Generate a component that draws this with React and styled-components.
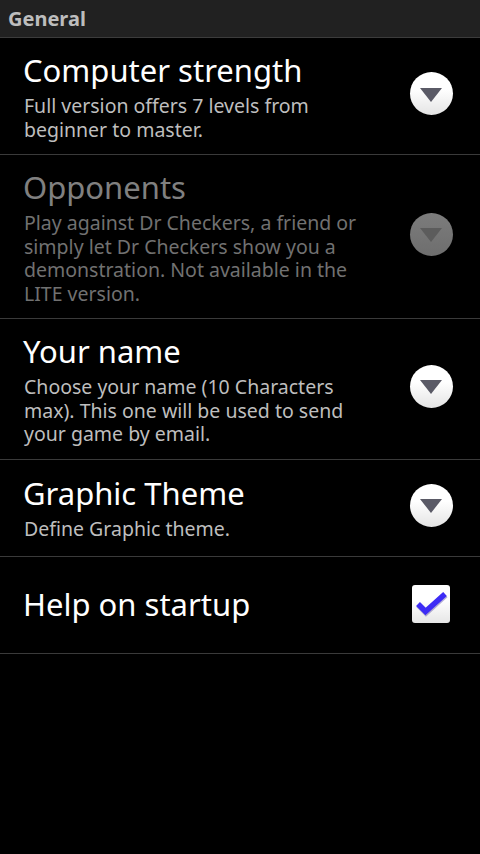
import React from 'react';
import styled, { createGlobalStyle } from 'styled-components';

const GlobalStyle = createGlobalStyle`
  html, body {
    margin: 0;
    padding: 0;
    background: #000;
    height: 100%;
  }
  body {
    font-family: "Noto Sans", "Open Sans", "DejaVu Sans", sans-serif;
  }
`;

const Screen = styled.div`
  width: 480px;
  min-height: 854px;
  background: #000;
  display: flex;
  flex-direction: column;
`;

const CategoryHeader = styled.div`
  height: 37px;
  background: #212121;
  border-bottom: 1px solid #3c3c3c;
  display: flex;
  align-items: center;
  padding-left: 8px;
  color: #bdbdbd;
  font-weight: 700;
  font-size: 20px;
`;

const Row = styled.div`
  min-height: 97px;
  box-sizing: border-box;
  display: flex;
  align-items: center;
  padding: ${(p) => (p.single ? '10px 27px 11px 24px' : '8px 27px 13px 24px')};
  border-bottom: 1px solid #3a3a3a;
`;

const TextBlock = styled.div`
  flex: 1;
  display: flex;
  flex-direction: column;
  min-width: 0;
`;

const Title = styled.div`
  font-size: 31px;
  line-height: 48px;
  margin-left: -1px;
  color: ${(p) => (p.disabled ? '#808080' : '#fff')};
`;

const Summary = styled.div`
  font-size: 19.5px;
  line-height: 23.5px;
  color: ${(p) => (p.disabled ? '#717171' : '#bebebe')};
  padding-right: 40px;
`;

const Widget = styled.div`
  width: 44px;
  height: 44px;
  flex: 0 0 auto;
  display: flex;
  align-items: center;
  justify-content: center;
`;

const Circle = styled.div`
  width: 43px;
  height: 43px;
  border-radius: 50%;
  background: ${(p) =>
    p.disabled
      ? 'linear-gradient(#7c7c7c, #6e6e6e)'
      : 'linear-gradient(#ffffff 40%, #e4e4e4)'};
  display: flex;
  align-items: center;
  justify-content: center;
`;

const Arrow = styled.div`
  width: 0;
  height: 0;
  margin-top: 2px;
  border-left: 11px solid transparent;
  border-right: 11px solid transparent;
  border-top: 14px solid ${(p) => (p.disabled ? '#5c5c5c' : '#5a5a66')};
`;

const CheckBox = styled.div`
  width: 38px;
  height: 38px;
  border-radius: 3px;
  background: linear-gradient(#ffffff 40%, #e6e6e6);
  display: flex;
  align-items: center;
  justify-content: center;
`;

const Dropdown = ({ disabled }) => (
  <Widget>
    <Circle disabled={disabled}>
      <Arrow disabled={disabled} />
    </Circle>
  </Widget>
);

const Check = () => (
  <Widget>
    <CheckBox>
      <svg width="38" height="38" viewBox="0 0 38 38">
        <path
          d="M6 19 L13.5 26.5 L33 9"
          fill="none"
          stroke="#2a1c8a"
          strokeOpacity="0.35"
          strokeWidth="6"
          transform="translate(0.5 1)"
        />
        <path
          d="M6 19 L13.5 26.5 L33 9"
          fill="none"
          stroke="#3d2cf5"
          strokeWidth="5.5"
        />
      </svg>
    </CheckBox>
  </Widget>
);

const prefs = [
  {
    title: 'Computer strength',
    summary: 'Full version offers 7 levels from beginner to master.',
  },
  {
    title: 'Opponents',
    summary:
      'Play against Dr Checkers, a friend or simply let Dr Checkers show you a demonstration. Not available in the LITE version.',
    disabled: true,
  },
  {
    title: 'Your name',
    summary:
      'Choose your name (10 Characters max). This one will be used to send your game by email.',
  },
  {
    title: 'Graphic Theme',
    summary: 'Define Graphic theme.',
  },
];

export default function App() {
  return (
    <>
      <GlobalStyle />
      <Screen>
        <CategoryHeader>General</CategoryHeader>
        {prefs.map((p) => (
          <Row key={p.title}>
            <TextBlock>
              <Title disabled={p.disabled}>{p.title}</Title>
              <Summary disabled={p.disabled}>{p.summary}</Summary>
            </TextBlock>
            <Dropdown disabled={p.disabled} />
          </Row>
        ))}
        <Row single>
          <TextBlock>
            <Title>Help on startup</Title>
          </TextBlock>
          <Check />
        </Row>
      </Screen>
    </>
  );
}
